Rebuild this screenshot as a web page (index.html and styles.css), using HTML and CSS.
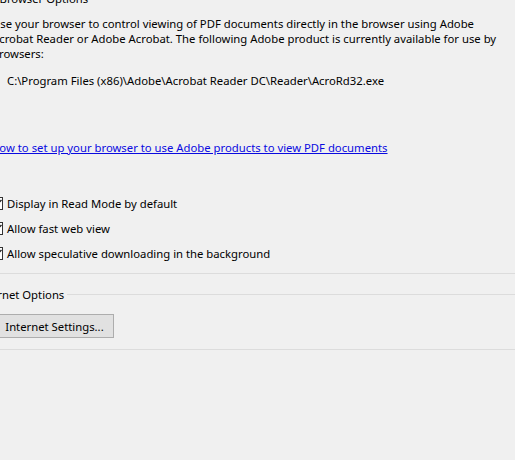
FILE: index.html
```html
<!DOCTYPE html>
<html lang="en">
<head>
<meta charset="UTF-8">
<title>Internet Preferences</title>
<link rel="stylesheet" href="styles.css">
</head>
<body>

  <div class="panel">
    <!-- Grupo: opciones del navegador -->
    <section class="group">
      <div class="group-head"><span>Web Browser Options</span></div>
      <p class="intro">Use your browser to control viewing of PDF documents directly in the browser using Adobe<br>Acrobat Reader or Adobe Acrobat. The following Adobe product is currently available for use by<br>browsers:</p>
      <p class="path">C:\Program Files (x86)\Adobe\Acrobat Reader DC\Reader\AcroRd32.exe</p>
      <a class="help-link" href="#">How to set up your browser to use Adobe products to view PDF documents</a>

      <ul class="checks">
        <li><span class="box"><svg viewBox="0 0 11 11"><path d="M2 5.5 L4.5 8 L10.5 2" /></svg></span>Display in Read Mode by default</li>
        <li><span class="box"><svg viewBox="0 0 11 11"><path d="M2 5.5 L4.5 8 L10.5 2" /></svg></span>Allow fast web view</li>
        <li><span class="box"><svg viewBox="0 0 11 11"><path d="M2 5.5 L4.5 8 L10.5 2" /></svg></span>Allow speculative downloading in the background</li>
      </ul>
    </section>

    <hr class="sep">

    <!-- Grupo: opciones de internet -->
    <section class="group">
      <div class="group-head"><span>Internet Options</span></div>
      <button class="btn">Internet Settings...</button>
    </section>

    <hr class="sep sep-bottom">
  </div>

</body>
</html>
```

FILE: styles.css
```css
body {
    margin: 0;
    background-color: #f0f0f0;
    font-family: "Noto Sans", "Open Sans", sans-serif;
    font-size: 11.3px;
    line-height: 15px;
    color: #000;
    overflow: hidden;
}

/* El panel empieza un poco fuera del borde izquierdo */
.panel {
    margin-left: -8px;
}

.group-head {
    display: flex;
    align-items: center;
    white-space: nowrap;
}

.group-head::after {
    content: "";
    flex: 1;
    height: 1px;
    margin-left: 3px;
    background-color: #dcdcdc;
}

.group:first-child .group-head {
    margin-top: -9px;
    margin-left: -19px;
}

.intro {
    margin: 10px 0 0;
    white-space: nowrap;
}

.path {
    margin: 12px 0 0 15px;
    white-space: nowrap;
}

.help-link {
    display: block;
    margin: 52px 0 0 -1px;
    color: #0a0ae0;
    white-space: nowrap;
}

/* Casillas de verificación */
.checks {
    list-style: none;
    margin: 41px 0 0 -2px;
    padding: 0;
    display: flex;
    flex-direction: column;
    gap: 10px;
}

.checks li {
    display: flex;
    align-items: center;
    gap: 4px;
    white-space: nowrap;
}

.box {
    width: 11px;
    height: 11px;
    border: 1px solid #333;
    background-color: #fff;
    display: flex;
}

.box svg {
    width: 11px;
    height: 11px;
    fill: none;
    stroke: #222;
    stroke-width: 1.4;
}

.sep {
    border: none;
    height: 1px;
    margin: 12px 0 0 8px;
    background-color: #dcdcdc;
}

.sep-bottom {
    margin-top: 11px;
}

.group:nth-of-type(2) .group-head {
    margin-top: 13px;
    margin-left: -16px;
}

.btn {
    display: block;
    width: 122px;
    height: 24px;
    margin-top: 12px;
    padding: 0 0 0 3px;
    background-color: #e1e1e1;
    border: 1px solid #adadad;
    font-family: inherit;
    font-size: 11.3px;
    color: #000;
}
```
